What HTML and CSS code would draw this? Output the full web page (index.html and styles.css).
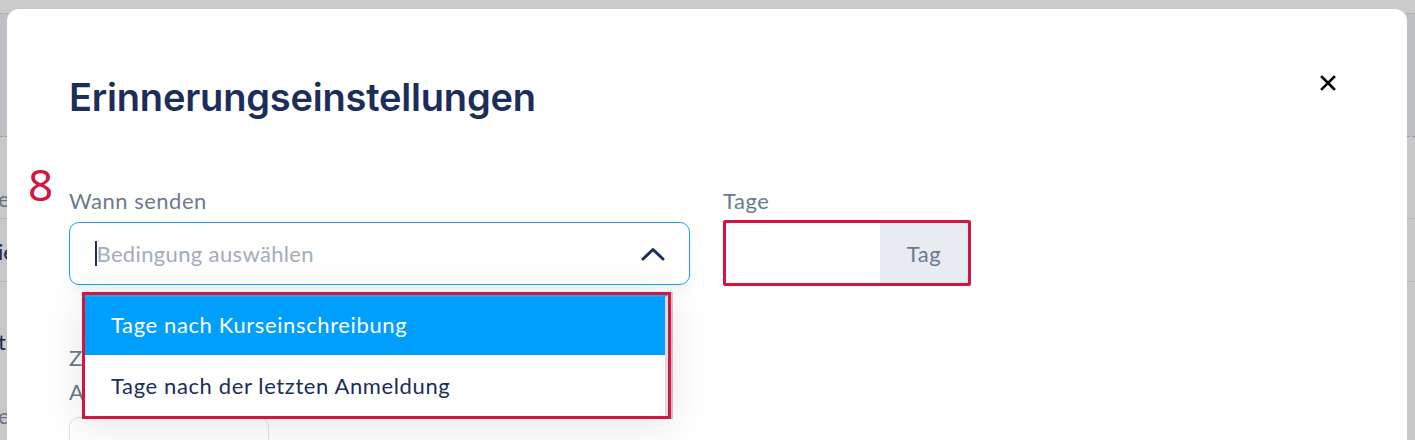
FILE: index.html
```html
<!DOCTYPE html>
<html lang="de">
<head>
<meta charset="utf-8">
<title>Erinnerungseinstellungen</title>
<link rel="stylesheet" href="styles.css">
</head>
<body>
<div class="page">
  <div class="page-top"></div>
  <div class="page-head"></div>
  <div class="page-row row-1">e</div>
  <div class="page-row row-2">ie</div>
  <div class="page-row row-3">t</div>
  <div class="page-row row-4">e</div>
</div>

<div class="modal">
  <span class="step-badge">8</span>
  <header class="modal-header">
    <h1 class="modal-title">Erinnerungseinstellungen</h1>
    <button class="close-btn" aria-label="Schließen">
      <svg width="16" height="16" viewBox="0 0 16 16"><path d="M2 2L14 14M14 2L2 14" stroke="#000" stroke-width="2.6" stroke-linecap="square"/></svg>
    </button>
  </header>

  <div class="form-row">
    <div class="field field-when">
      <label class="field-label">Wann senden</label>
      <div class="select">
        <span class="caret"></span>
        <span class="placeholder">Bedingung auswählen</span>
        <svg class="chevron" width="24" height="14" viewBox="0 0 24 14"><path d="M2 12L12 2.5L22 12" fill="none" stroke="#1b2d5b" stroke-width="3" stroke-linecap="round" stroke-linejoin="round"/></svg>
      </div>
      <div class="dropdown">
        <div class="option option-active">Tage nach Kurseinschreibung</div>
        <div class="option">Tage nach der letzten Anmeldung</div>
      </div>
      <div class="next-field">
        <div class="next-label">Z<br>A</div>
        <div class="next-input"></div>
      </div>
    </div>
    <div class="field field-days">
      <label class="field-label">Tage</label>
      <div class="days-group">
        <div class="days-input"></div>
        <div class="days-addon">Tag</div>
      </div>
    </div>
  </div>
</div>
</body>
</html>
```

FILE: styles.css
```css
* { box-sizing: border-box; }
html, body {
  margin: 0;
  height: 440px;
  overflow: hidden;
}
body {
  background: #cacaca;
  font-family: Lato, "Noto Sans", sans-serif;
  position: relative;
}

/* underlying page, dimmed */
.page {
  display: flex;
  flex-direction: column;
}
.page-top { height: 13px; background: #cacaca; }
.page-head {
  height: 124px;
  background: #bfc0c4;
  border-top: 1px dashed #a9abb0;
  border-bottom: 1px dashed #9a9ca2;
}
.page-row {
  font-size: 22px;
  color: #545a66;
  margin-left: -2px;
  background: #c8c8c8;
}
.row-1 { height: 82px; padding-top: 48px; border-bottom: 1px solid #b4b4b4; color: #6a7282; }
.row-2 { height: 63px; padding-top: 19px; border-bottom: 1px solid #b4b4b4; color: #1e2a4a; }
.row-3 { height: 80px; padding-top: 46px; color: #1e2a4a; }
.row-4 { height: 90px; padding-top: 40px; color: #6a7282; }

/* modal */
.modal {
  position: absolute;
  left: 7px;
  top: 9px;
  width: 1400px;
  height: 520px;
  background: #fff;
  border-radius: 12px;
  padding: 56px 62px 0 62px;
}
.step-badge {
  position: absolute;
  left: 21px;
  top: 153px;
  font-size: 44px;
  line-height: 1;
  color: #d4163f;
  font-family: "Noto Sans", sans-serif;
}
.modal-header {
  display: flex;
  justify-content: space-between;
  align-items: center;
}
.modal-title {
  margin: 0;
  font-family: Inter, sans-serif;
  font-weight: 600;
  font-size: 38px;
  line-height: 64px;
  color: #1b2d5b;
  letter-spacing: -0.2px;
}
.close-btn {
  border: 0;
  background: none;
  padding: 0;
  margin-right: 9px;
  margin-top: -28px;
  width: 16px;
  height: 16px;
  display: flex;
}

.form-row {
  display: flex;
  gap: 33px;
  margin-top: 60px;
}
.field { display: flex; flex-direction: column; }
.field-when { width: 621px; position: relative; }
.field-days { width: 248px; }
.field-label {
  font-size: 22px;
  letter-spacing: 0.5px;
  line-height: 24px;
  color: #6c7a91;
  margin-bottom: 9px;
}

.select {
  height: 63px;
  border: 1px solid #1ba1f2;
  border-radius: 10px;
  display: flex;
  align-items: center;
  padding: 0 24px 0 25px;
  box-shadow: 0 6px 14px rgba(0,0,0,0.05);
}
.caret {
  width: 1.5px;
  height: 25px;
  background: #1b2d5b;
}
.placeholder {
  flex: 1;
  font-size: 22px;
  letter-spacing: 0.35px;
  color: #a3acbb;
  margin-bottom: 1px;
}
.chevron { display: block; }

.dropdown {
  position: absolute;
  left: 13px;
  top: 103px;
  width: 589px;
  border: 3px solid #d4163f;
  background: #fff;
  box-shadow: 0 8px 40px rgba(0,0,0,0.10), 2px 0 0 #c9cdd3;
  z-index: 2;
}
.option {
  height: 61px;
  display: flex;
  align-items: center;
  padding-left: 26px;
  font-size: 22px;
  letter-spacing: 0.62px;
  color: #1b2d5b;
  border-right: 3px solid #d9dde3;
}
.option-active {
  background: #009ffd;
  color: #fff;
  border-top: 2px solid #1aa8f7;
  height: 60px;
  padding-bottom: 3px;
}

.next-field {
  margin-top: 56px;
}
.next-label {
  font-size: 22px;
  line-height: 34px;
  color: #6c7a91;
}
.next-input {
  width: 200px;
  height: 60px;
  margin-top: 8px;
  border: 1px solid #dfe2e7;
  border-radius: 10px;
}

.days-group {
  height: 66px;
  border: 3px solid #d4163f;
  border-radius: 2px;
  display: flex;
  margin-top: -2px;
}
.days-input { flex: 1; background: #fff; }
.days-addon {
  width: 88px;
  background: #e8ebef;
  display: flex;
  align-items: center;
  justify-content: center;
  font-size: 22px;
  letter-spacing: 0.5px;
  color: #6c7a91;
}
```
